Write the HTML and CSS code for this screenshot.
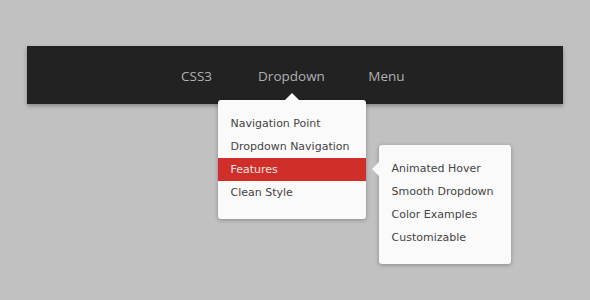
FILE: index.html
```html
<!DOCTYPE html>
<html lang="en">
<head>
    <meta charset="UTF-8">
    <title>CSS3 Dropdown Menu</title>
    <link rel="stylesheet" href="styles.css">
</head>
<body>
    <nav class="menu">
        <ul class="menu-list">
            <li class="menu-item"><a href="#">CSS3</a></li>
            <li class="menu-item">
                <a href="#">Dropdown</a>
                <ul class="dropdown">
                    <li><a href="#">Navigation Point</a></li>
                    <li><a href="#">Dropdown Navigation</a></li>
                    <li class="active">
                        <a href="#">Features</a>
                        <ul class="dropdown sub">
                            <li><a href="#">Animated Hover</a></li>
                            <li><a href="#">Smooth Dropdown</a></li>
                            <li><a href="#">Color Examples</a></li>
                            <li><a href="#">Customizable</a></li>
                        </ul>
                    </li>
                    <li><a href="#">Clean Style</a></li>
                </ul>
            </li>
            <li class="menu-item"><a href="#">Menu</a></li>
        </ul>
    </nav>
</body>
</html>
```

FILE: styles.css
```css
* {
    margin: 0;
    padding: 0;
    box-sizing: border-box;
}

html,
body {
    height: 100%;
}

body {
    background: #c1c1c1;
    padding: 46px 27px 0;
    font-family: "DejaVu Sans", Verdana, sans-serif;
}

ul {
    list-style: none;
}

a {
    text-decoration: none;
}

.menu {
    position: relative;
    z-index: 1;
    background: #222;
    height: 58px;
    box-shadow: 0 2px 4px rgba(0, 0, 0, 0.3);
}

.menu-list {
    display: flex;
    justify-content: center;
    padding-right: 7px;
}

.menu-item {
    position: relative;
    width: 95px;
    text-align: center;
}

.menu-item > a {
    display: block;
    padding-top: 2px;
    line-height: 57px;
    font-family: "Open Sans", sans-serif;
    font-size: 13.5px;
    color: #b0b0b0;
}

.dropdown {
    position: absolute;
    z-index: 2;
    top: 54px;
    left: 50%;
    margin-left: -74px;
    width: 148px;
    padding: 12px 0 15px;
    background: #fafafa;
    border-radius: 3px;
    box-shadow: 0 1px 4px rgba(0, 0, 0, 0.3);
    text-align: left;
}

.dropdown::before {
    content: "";
    position: absolute;
    top: -7px;
    left: 50%;
    margin-left: -7px;
    border: 7px solid transparent;
    border-top: 0;
    border-bottom-color: #fafafa;
}

.dropdown li {
    position: relative;
}

.dropdown a {
    display: block;
    height: 23px;
    padding-top: 1px;
    line-height: 22px;
    padding-left: 13px;
    font-size: 11px;
    color: #444;
    white-space: nowrap;
}

.dropdown .active > a {
    background: #cf2e29;
    color: #f6e6e5;
}

.dropdown.sub {
    top: -13px;
    left: 100%;
    margin-left: 13px;
    width: 132px;
}

.dropdown.sub::before {
    top: 17px;
    left: -7px;
    margin-left: 0;
    border: 7px solid transparent;
    border-left: 0;
    border-right-color: #fafafa;
}
```
